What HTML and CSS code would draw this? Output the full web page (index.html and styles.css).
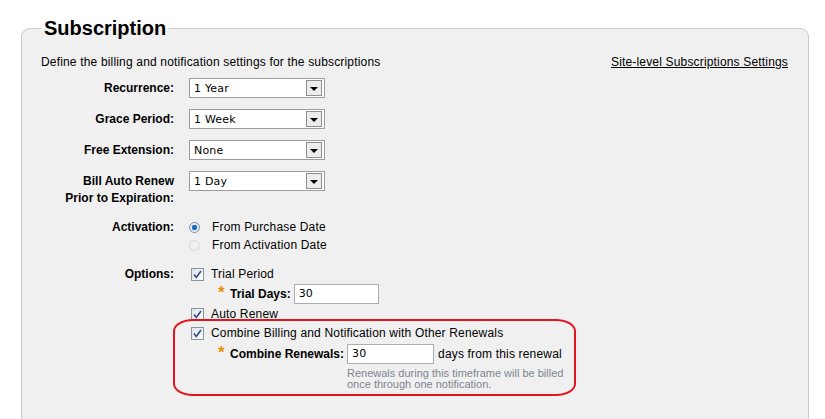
FILE: index.html
```html
<!DOCTYPE html>
<html>
<head>
<meta charset="utf-8">
<link rel="stylesheet" href="styles.css">
</head>
<body>
<div class="page">
  <fieldset class="panel">
    <legend class="legend">Subscription</legend>
    <div class="header">
      <span class="desc">Define the billing and notification settings for the subscriptions</span>
      <a class="sitelink" href="#">Site-level Subscriptions Settings</a>
    </div>
    <div class="form">
      <div class="row">
        <div class="label">Recurrence:</div>
        <div class="ctrl"><div class="select"><span class="val">1 Year</span><span class="arrow"><span class="tri"></span></span></div></div>
      </div>
      <div class="row">
        <div class="label">Grace Period:</div>
        <div class="ctrl"><div class="select"><span class="val">1 Week</span><span class="arrow"><span class="tri"></span></span></div></div>
      </div>
      <div class="row">
        <div class="label">Free Extension:</div>
        <div class="ctrl"><div class="select"><span class="val">None</span><span class="arrow"><span class="tri"></span></span></div></div>
      </div>
      <div class="row">
        <div class="label">Bill Auto Renew<br>Prior to Expiration:</div>
        <div class="ctrl"><div class="select"><span class="val">1 Day</span><span class="arrow"><span class="tri"></span></span></div></div>
      </div>
      <div class="row row-act">
        <div class="label label-line">Activation:</div>
        <div class="ctrl">
          <div class="line"><span class="radio on"></span><span class="opt-r">From Purchase Date</span></div>
          <div class="line"><span class="radio off"></span><span class="opt-r">From Activation Date</span></div>
        </div>
      </div>
      <div class="row row-opt">
        <div class="label label-line">Options:</div>
        <div class="ctrl">
          <div class="line"><span class="check"><svg viewBox="0 0 13 13" width="13" height="13"><path d="M3 6.5 L5.3 9.5 L10 3" fill="none" stroke="#2c4f8c" stroke-width="1.6"/></svg></span><span class="opt">Trial Period</span></div>
          <div class="sub"><span class="ast">*</span><span class="sublabel">Trial Days:</span><span class="input w85">30</span></div>
          <div class="line"><span class="check"><svg viewBox="0 0 13 13" width="13" height="13"><path d="M3 6.5 L5.3 9.5 L10 3" fill="none" stroke="#2c4f8c" stroke-width="1.6"/></svg></span><span class="opt">Auto Renew</span></div>
          <div class="line line-gap"><span class="check"><svg viewBox="0 0 13 13" width="13" height="13"><path d="M3 6.5 L5.3 9.5 L10 3" fill="none" stroke="#2c4f8c" stroke-width="1.6"/></svg></span><span class="opt">Combine Billing and Notification with Other Renewals</span></div>
          <div class="sub sub2"><span class="ast">*</span><span class="sublabel">Combine Renewals:</span><span class="input w87">30</span><span class="after">days from this renewal</span></div>
          <div class="help">Renewals during this timeframe will be billed<br>once through one notification.</div>
        </div>
      </div>
    </div>
    <div class="annot"></div>
  </fieldset>
</div>
</body>
</html>
```

FILE: styles.css
```css
html, body {
  margin: 0;
  padding: 0;
  background: #ffffff;
  font-family: "Liberation Sans", Arial, sans-serif;
  font-size: 12px;
  letter-spacing: 0.17px;
  color: #000;
  overflow: hidden;
}
.page {
  padding: 17px 17px 0 21px;
  height: 419px;
  box-sizing: border-box;
}
.panel {
  position: relative;
  margin: 0;
  width: 788px;
  box-sizing: border-box;
  border: 1px solid #c9c9c9;
  border-radius: 9px;
  background: #f0f0f0;
  padding: 15px 20px 40px 19px;
  min-height: 420px;
}
.legend {
  font-size: 20px;
  font-weight: bold;
  letter-spacing: 0;
  padding: 0 3px;
  margin-left: 0;
  line-height: 22px;
}
.header {
  display: flex;
  justify-content: space-between;
  line-height: 16px;
}
.sitelink {
  color: #000;
  text-decoration: underline;
}
.form {
  margin-top: 8px;
  display: flex;
  flex-direction: column;
  gap: 11px;
}
.row {
  display: flex;
  gap: 15px;
}
.label {
  width: 133px;
  flex: none;
  text-align: right;
  font-weight: bold;
  letter-spacing: 0;
  line-height: 17px;
  padding-top: 2px;
}
.label-line {
  padding-top: 0;
  line-height: 18px;
}
.row-act { margin-top: 0; }
.row-opt { margin-top: 0; }
.select {
  width: 136px;
  height: 20px;
  box-sizing: border-box;
  border: 1px solid #9c9c9c;
  background: #fff;
  display: flex;
  align-items: center;
  justify-content: space-between;
  padding: 0 2px 0 4px;
}
.val {
  font-family: "DejaVu Sans", Verdana, sans-serif;
  font-size: 11px;
  letter-spacing: 0.2px;
}
.arrow {
  width: 16px;
  height: 16px;
  box-sizing: border-box;
  border: 1px solid #8f8f8f;
  background: #ececec;
  display: flex;
  align-items: center;
  justify-content: center;
}
.tri {
  width: 0;
  height: 0;
  border-left: 4px solid transparent;
  border-right: 4px solid transparent;
  border-top: 4px solid #000;
  margin-top: 1px;
}
.line {
  display: flex;
  align-items: center;
  height: 18px;
  line-height: 18px;
}
.line-gap { margin-top: 1px; }
.radio {
  width: 11px;
  height: 11px;
  border-radius: 50%;
  box-sizing: border-box;
  flex: none;
  margin-left: 0;
}
.radio.on {
  border: 1px solid #7a8ea6;
  background: radial-gradient(circle, #1d66b8 0, #2a74c4 2.5px, #dbe6f2 3px, #f4f6f9 5px);
}
.radio.off {
  border: 1px solid #dcdcdc;
  background: radial-gradient(circle, #f4f4f4 0, #ececec 5px);
}
.opt-r { margin-left: 12px; }
.check {
  width: 13px;
  height: 13px;
  box-sizing: border-box;
  border: 1px solid #8d949c;
  background: linear-gradient(135deg, #dfe3e8, #fbfbfc);
  margin-left: 2px;
  flex: none;
  display: flex;
}
.check svg { margin: -1px; }
.opt { margin-left: 7px; }
.sub {
  display: flex;
  align-items: center;
  height: 20px;
  margin: 1px 0 1px 29px;
}
.sub2 { margin-left: 29px; margin-top: 2px; }
.ast {
  color: #e8900c;
  font-weight: bold;
  font-size: 17px;
  line-height: 12px;
  margin-top: -2px;
  width: 12px;
}
.sublabel {
  font-weight: bold;
  letter-spacing: 0;
  margin-right: 3px;
}
.input {
  height: 20px;
  box-sizing: border-box;
  border: 1px solid #a9aeb4;
  background: #fff;
  font-family: "DejaVu Sans", Verdana, sans-serif;
  font-size: 11px;
  line-height: 18px;
  padding-left: 4px;
}
.w85 { width: 85px; }
.w87 { width: 87px; }
.after { margin-left: 4px; }
.help {
  margin: 4px 0 0 158px;
  color: #7d8590;
  font-size: 11px;
  letter-spacing: 0;
  line-height: 11px;
}
.annot {
  position: absolute;
  left: 151px;
  top: 280px;
  width: 403px;
  height: 77px;
  box-sizing: border-box;
  border: 2px solid #e3141c;
  border-radius: 20px / 12px;
  pointer-events: none;
}
```
